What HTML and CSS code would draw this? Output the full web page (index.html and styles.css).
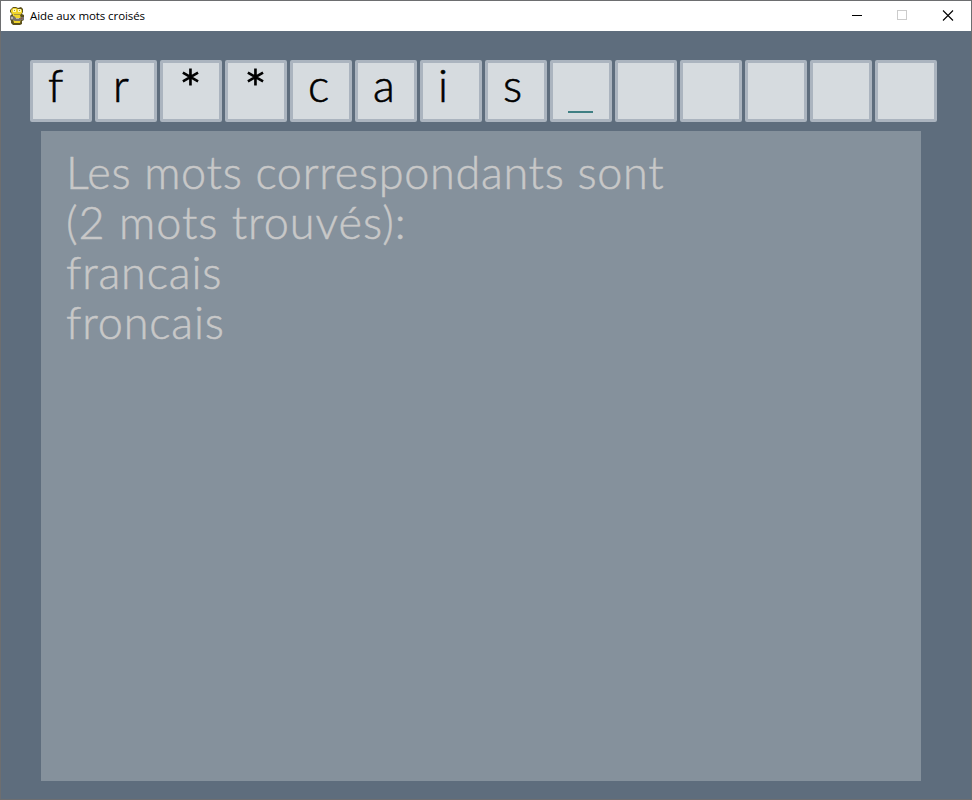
FILE: index.html
```html
<!DOCTYPE html>
<html lang="fr">
<head>
<meta charset="utf-8">
<title>Aide aux mots croisés</title>
<link rel="stylesheet" href="styles.css">
</head>
<body>
<div class="window">
  <header class="titlebar">
    <svg class="app-icon" width="16" height="18" viewBox="0 0 16 18">
      <path fill="#5b501c" d="M4 0h3l2 1 3-1 2 2v3l-1 2 2 1v5l-2 1v3l-2 1H4l-2-2v-2L1 12V9l2-2-2-2V3z"/>
      <path fill="#f0d42a" d="M4 1h3l2 1h3l1 1v3l-2 2 1 3-1 5H5l-1-4V8L2 5V3z"/>
      <path fill="#fff7b8" d="M4 2h3v3H4zM9 2h3v3H9z"/>
      <path fill="#a8983a" d="M5 3h1v1H5zM10 3h1v1h-1zM5 7h6v1H5z"/>
      <path fill="#77716b" d="M1 9h4l2 2h4l1-1h3v3h-3l-1 1H6l-2-1H1z"/>
      <path fill="#b9b5ad" d="M2 10h2v2H2zM7 11h3v1H7z"/>
      <path fill="#a34c35" d="M12 11h1v1h-1z"/>
    </svg>
    <span class="title">Aide aux mots croisés</span>
    <svg class="controls" width="138" height="30" viewBox="0 0 138 30" fill="none" shape-rendering="crispEdges">
      <path stroke="#000" d="M19 14.500h10"/>
      <path stroke="#ccc" d="M64.500 9.500h9v9h-9z"/>
      <path stroke="#000" stroke-width="1.100" shape-rendering="auto" d="M110 9.500l10 10M120 9.500l-10 10"/>
    </svg>
  </header>
  <main class="content">
    <div class="cells">
      <div class="cell">f</div>
      <div class="cell">r</div>
      <div class="cell star">*</div>
      <div class="cell star">*</div>
      <div class="cell">c</div>
      <div class="cell">a</div>
      <div class="cell">i</div>
      <div class="cell">s</div>
      <div class="cell"><span class="cursor"></span></div>
      <div class="cell"></div>
      <div class="cell"></div>
      <div class="cell"></div>
      <div class="cell"></div>
      <div class="cell"></div>
    </div>
    <section class="results">
      <div class="line intro">Les mots correspondants sont</div>
      <div class="line count">(2 mots trouvés):</div>
      <div class="line word">francais</div>
      <div class="line word">froncais</div>
    </section>
  </main>
</div>
</body>
</html>
```
FILE: styles.css
```css
* { box-sizing: border-box; }

body {
  margin: 0;
  overflow: hidden;
}

.window {
  width: 972px;
  height: 800px;
  border: 1px solid #6d6e70;
  background: #5e6d7d;
  display: flex;
  flex-direction: column;
}

.titlebar {
  height: 30px;
  background: #fff;
  display: flex;
  align-items: center;
  padding-left: 8px;
}

.app-icon { margin-right: 5px; }

.title {
  font: 11.5px/30px "Open Sans", "Noto Sans", sans-serif;
  letter-spacing: -0.08px;
  color: #000;
}

.controls { margin-left: auto; }

.content { padding: 29px 29px 0; }

.cells {
  display: flex;
  gap: 3px;
}

.cell {
  width: 62px;
  height: 62px;
  flex: none;
  border: 3px solid #abb4bf;
  border-radius: 2px;
  background: #d6dbdf;
  padding-left: 15px;
  font: 300 45px/44px Lato, sans-serif;
  color: #000;
  -webkit-text-stroke: 0.6px #000;
}

.star {
  padding-left: 16px;
  font-size: 54px;
  line-height: 52px;
  -webkit-text-stroke-width: 1.2px;
}

.cursor {
  display: block;
  width: 25px;
  height: 2px;
  margin-top: 48px;
  background: #3f7f83;
}

.results {
  width: 880px;
  height: 650px;
  margin: 9px 0 0 11px;
  padding: 16px 0 0 25px;
  background: #85919c;
  color: #c8c8c8;
  font: 300 45px/50px Lato, sans-serif;
}

.line {
  height: 50px;
  white-space: nowrap;
  -webkit-text-stroke: 0.5px #c8c8c8;
}

.intro { letter-spacing: 0.7px; }
.count { letter-spacing: 1px; }
.word { letter-spacing: 0.85px; }
```
